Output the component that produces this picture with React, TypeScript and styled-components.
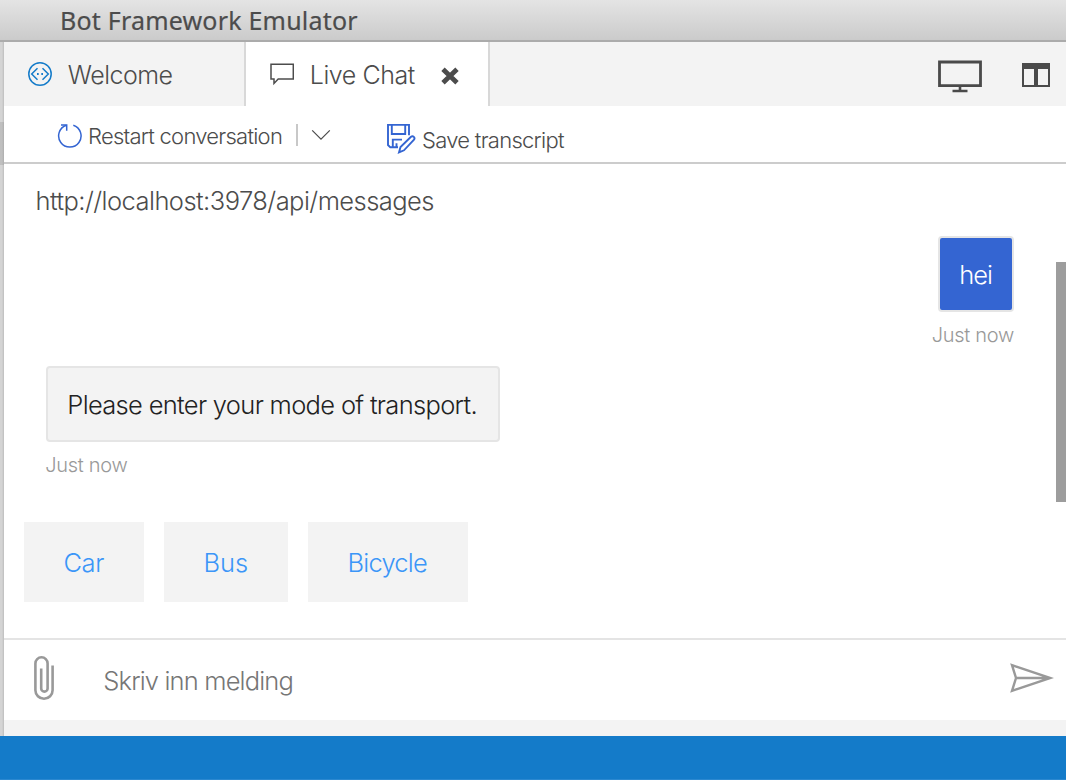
import React from "react";
import styled, { createGlobalStyle } from "styled-components";

const GlobalStyle = createGlobalStyle`
  *, *::before, *::after { box-sizing: border-box; }
  body { margin: 0; overflow: hidden; background: #fff; }
  button, input { font: inherit; color: inherit; border: 0; background: none; padding: 0; outline: 0; }
  svg { display: block; flex: none; }
`;

const Window = styled.div`
  display: flex;
  flex-direction: column;
  width: 1066px;
  height: 780px;
  font-family: Inter, "Liberation Sans", sans-serif;
  font-weight: 300;
  color: #4c4c4c;
`;

const TitleBar = styled.header`
  height: 42px;
  padding-left: 60px;
  background: linear-gradient(#e4e4e4, #cbcbcb);
  border-bottom: 2px solid #ababab;
  font-family: "Noto Sans", sans-serif;
  font-weight: 400;
  font-size: 25px;
  letter-spacing: 0.2px;
  -webkit-text-stroke: 0.2px #4c4c4c;
  line-height: 41px;
  white-space: nowrap;
`;

const Body = styled.div`
  display: flex;
  height: 694px;
`;

const Gutter = styled.div`
  width: 4px;
  padding-top: 80px;
  background: linear-gradient(90deg, #d4d4d4 50%, #bdbdbd);
`;

const GutterMark = styled.div`
  height: 43px;
  background: linear-gradient(90deg, #bfbfbf 50%, #adadad);
`;

const Main = styled.main`
  flex: 1;
  display: flex;
  flex-direction: column;
  min-width: 0;
  background: #fff;
`;

const TabBar = styled.nav`
  display: flex;
  height: 64px;
  background: #f3f3f3;
`;

const Tab = styled.div<{ $active?: boolean; $width: number }>`
  display: flex;
  align-items: center;
  width: ${(p) => p.$width}px;
  padding-left: 24px;
  border-right: 2px solid #d8d8d8;
  background: ${(p) => (p.$active ? "#fff" : "#f3f3f3")};
`;

const Label = styled.span<{ $size?: number; $spacing?: number }>`
  font-size: ${(p) => p.$size ?? 25.5}px;
  letter-spacing: ${(p) => p.$spacing ?? 0}px;
  white-space: nowrap;
`;

const TabLabel = styled(Label)`
  margin-left: 15.8px;
  padding-top: 2px;
  line-height: 64px;
`;

const CloseButton = styled.button`
  margin-left: 26.2px;
  padding-top: 3px;
`;

const TabActions = styled.div`
  display: flex;
  align-items: flex-start;
  gap: 40px;
  margin-left: auto;
  padding: 18px 16px 0 0;
`;

const Toolbar = styled.div`
  display: flex;
  align-items: flex-start;
  height: 58px;
  padding-left: 53px;
  border-bottom: 2px solid #ccc;
`;

const ToolButton = styled.button<{ $top: number; $gap: number }>`
  display: flex;
  align-items: flex-start;
  gap: ${(p) => p.$gap}px;
  height: 56px;
  padding-top: ${(p) => p.$top}px;
`;

const ToolLabel = styled(Label)<{ $drop: number }>`
  line-height: 28px;
  margin-top: ${(p) => p.$drop}px;
`;

const Divider = styled.div`
  width: 2px;
  height: 22px;
  margin: 18px 13px 0 14px;
  background: #c8c8c8;
`;

const MenuButton = styled.button`
  padding-top: 23px;
  margin-right: 55px;
`;

const Chat = styled.section`
  position: relative;
  display: flex;
  flex-direction: column;
  height: 474px;
`;

const Endpoint = styled(Label)`
  margin: 17px 0 0 31.5px;
  line-height: 40px;
`;

const Message = styled.div<{ $mine?: boolean }>`
  display: flex;
  flex-direction: column;
  align-items: ${(p) => (p.$mine ? "flex-end" : "flex-start")};
  padding: ${(p) => (p.$mine ? "15px 52px 0 0" : "16px 0 0 42px")};
`;

const Bubble = styled.div<{ $mine?: boolean }>`
  width: ${(p) => (p.$mine ? 76 : 454)}px;
  height: 76px;
  padding-left: 19.3px;
  border: 2px solid #e5e5e5;
  border-radius: 4px;
  background: ${(p) => (p.$mine ? "#3465d2" : "#f3f3f3")};
  color: ${(p) => (p.$mine ? "#fff" : "#222")};
  line-height: 73px;
`;

const Timestamp = styled(Label)`
  margin-top: 8px;
  margin-left: -0.7px;
  line-height: 30px;
  color: #999;
`;

const Suggestions = styled.div`
  display: flex;
  gap: 20px;
  padding: 42px 0 0 20px;
`;

const Suggestion = styled.button<{ $width: number }>`
  width: ${(p) => p.$width}px;
  height: 80px;
  padding-left: 39.4px;
  text-align: left;
  line-height: 81px;
  background: #f3f3f3;
  color: #3b96f8;
`;

const ScrollThumb = styled.div`
  position: absolute;
  top: 98px;
  right: 0;
  width: 10px;
  height: 240px;
  background: #9d9d9d;
`;

const Composer = styled.div`
  display: flex;
  height: 82px;
  padding: 0 12px 0 27px;
  border-top: 2px solid #e4e4e4;
  color: #999;
`;

const Placeholder = styled(Label)`
  flex: 1;
  margin-left: 48.3px;
  line-height: 82px;
  color: #767676;
`;

const AttachButton = styled.button`
  display: flex;
  padding-top: 15px;
`;

const SendButton = styled.button`
  display: flex;
  padding-top: 22px;
`;

const BottomStrip = styled.div`
  height: 16px;
  background: #f3f3f3;
`;

const StatusBar = styled.footer`
  height: 44px;
  background: #147bc9;
  border-bottom: 1px solid #2b88d0;
`;

const BotIcon = () => (
  <svg width="24" height="24" viewBox="0 0 24 24" fill="none" stroke="#147bc9" strokeWidth="1.5">
    <circle cx="12" cy="12" r="11.2" />
    <path d="M9.5 6.2 3.7 12l5.8 5.8M14.5 6.2l5.8 5.8-5.8 5.8" />
    <path d="M9 12h1.7M13.3 12H15" strokeWidth="1.8" />
  </svg>
);

const ChatIcon = () => (
  <svg width="24" height="24" viewBox="0 0 24 24" fill="none" stroke="#4c4c4c" strokeWidth="1.5">
    <path d="M1 2.2h22.3V17H8.2L4 21.4V17H1z" />
  </svg>
);

const CloseIcon = () => (
  <svg width="18" height="18" viewBox="0 0 18 18" stroke="#4c4c4c" strokeWidth="4.8">
    <path d="M2 2.2 16 15.8M16 2.2 2 15.8" />
  </svg>
);

const MonitorIcon = () => (
  <svg width="44" height="34" viewBox="0 0 44 34" fill="none" stroke="#4a4a4a">
    <path d="M1.5 2h41v23.7h-41z" strokeWidth="2.8" />
    <path d="M22 26v4" strokeWidth="2.6" />
    <path d="M14.5 31h15" strokeWidth="2.5" />
  </svg>
);

const ColumnsIcon = () => (
  <svg width="28" height="28" viewBox="0 0 28 28">
    <path fillRule="evenodd" fill="#4a4a4a" d="M0 3h28v24H0zM2 9v16h10V9zM16 9v16h10V9z" />
  </svg>
);

const RestartIcon = () => (
  <svg width="26" height="26" viewBox="0 0 26 26" fill="none" stroke="#3465d2" strokeWidth="1.5">
    <path d="M16.3 2.2A11.2 11.2 0 1 1 9.4 2.2" />
    <path d="M4 2h5.7v5.8" />
  </svg>
);

const ChevronIcon = () => (
  <svg width="20" height="12" viewBox="0 0 20 12" fill="none" stroke="#4c4c4c" strokeWidth="1.2">
    <path d="m1.2 1.4 8.8 8.8 8.8-8.8" />
  </svg>
);

const SaveIcon = () => (
  <svg width="30" height="32" viewBox="0 0 30 32" fill="none" stroke="#3465d2" strokeWidth="1.9">
    <path d="M23 13.2V2.9H2V23l2.3 2.3H12" />
    <path d="M5.8 2.9V12h13.4V2.9" />
    <path d="M6.8 25v-7.4H16M10.5 25v-3.7" />
    <path d="m13 30.4 1.5-5.4L25 14.7c2-1.5 4.5 1 3 3L18 28.3z" />
  </svg>
);

const ClipIcon = () => (
  <svg width="24" height="46" viewBox="0 0 24 46" fill="none" stroke="#999" strokeWidth="2.6">
    <path d="M10.2 13.5v19.9a3.2 3.2 0 0 0 6.4 0V8.4a6 6 0 0 0-12.2 0v26.8a8.6 8.6 0 0 0 17.2 0V10.5" />
  </svg>
);

const SendIcon = () => (
  <svg width="44" height="32" viewBox="0 0 44 32" fill="none" stroke="#999" strokeWidth="2.4">
    <path d="M2 3.2 40.5 16 2 28.8 6 16zM6 16h34" />
  </svg>
);

const suggestions = [
  { text: "Car", width: 120, spacing: -0.4 },
  { text: "Bus", width: 124, spacing: 0 },
  { text: "Bicycle", width: 160, spacing: -0.75 },
];

export default function App() {
  return (
    <>
      <GlobalStyle />
      <Window>
        <TitleBar>Bot Framework Emulator</TitleBar>
        <Body>
          <Gutter><GutterMark /></Gutter>
          <Main>
            <TabBar>
              <Tab $width={242}>
                <BotIcon />
                <TabLabel $size={25} $spacing={-0.5}>Welcome</TabLabel>
              </Tab>
              <Tab $active $width={244}>
                <ChatIcon />
                <TabLabel $size={25} $spacing={-0.45}>Live Chat</TabLabel>
                <CloseButton aria-label="Close tab"><CloseIcon /></CloseButton>
              </Tab>
              <TabActions>
                <MonitorIcon />
                <ColumnsIcon />
              </TabActions>
            </TabBar>
            <Toolbar>
              <ToolButton $top={17} $gap={5}>
                <RestartIcon />
                <ToolLabel $size={22} $spacing={-0.75} $drop={-1}>Restart conversation</ToolLabel>
              </ToolButton>
              <Divider />
              <MenuButton aria-label="Restart options"><ChevronIcon /></MenuButton>
              <ToolButton $top={16} $gap={6}>
                <SaveIcon />
                <ToolLabel $size={22} $spacing={-0.73} $drop={4}>Save transcript</ToolLabel>
              </ToolButton>
            </Toolbar>
            <Chat>
              <Endpoint $spacing={-0.55}>http://localhost:3978/api/messages</Endpoint>
              <Message $mine>
                <Bubble $mine><Label $spacing={-1.1}>hei</Label></Bubble>
                <Timestamp $size={20} $spacing={-0.3}>Just now</Timestamp>
              </Message>
              <Message>
                <Bubble><Label $spacing={-0.68}>Please enter your mode of transport.</Label></Bubble>
                <Timestamp $size={20} $spacing={-0.3}>Just now</Timestamp>
              </Message>
              <Suggestions>
                {suggestions.map((s) => (
                  <Suggestion key={s.text} $width={s.width}>
                    <Label $spacing={s.spacing}>{s.text}</Label>
                  </Suggestion>
                ))}
              </Suggestions>
              <ScrollThumb />
            </Chat>
            <Composer>
              <AttachButton aria-label="Attach file"><ClipIcon /></AttachButton>
              <Placeholder $spacing={-0.85}>Skriv inn melding</Placeholder>
              <SendButton aria-label="Send"><SendIcon /></SendButton>
            </Composer>
            <BottomStrip />
          </Main>
        </Body>
        <StatusBar />
      </Window>
    </>
  );
}
